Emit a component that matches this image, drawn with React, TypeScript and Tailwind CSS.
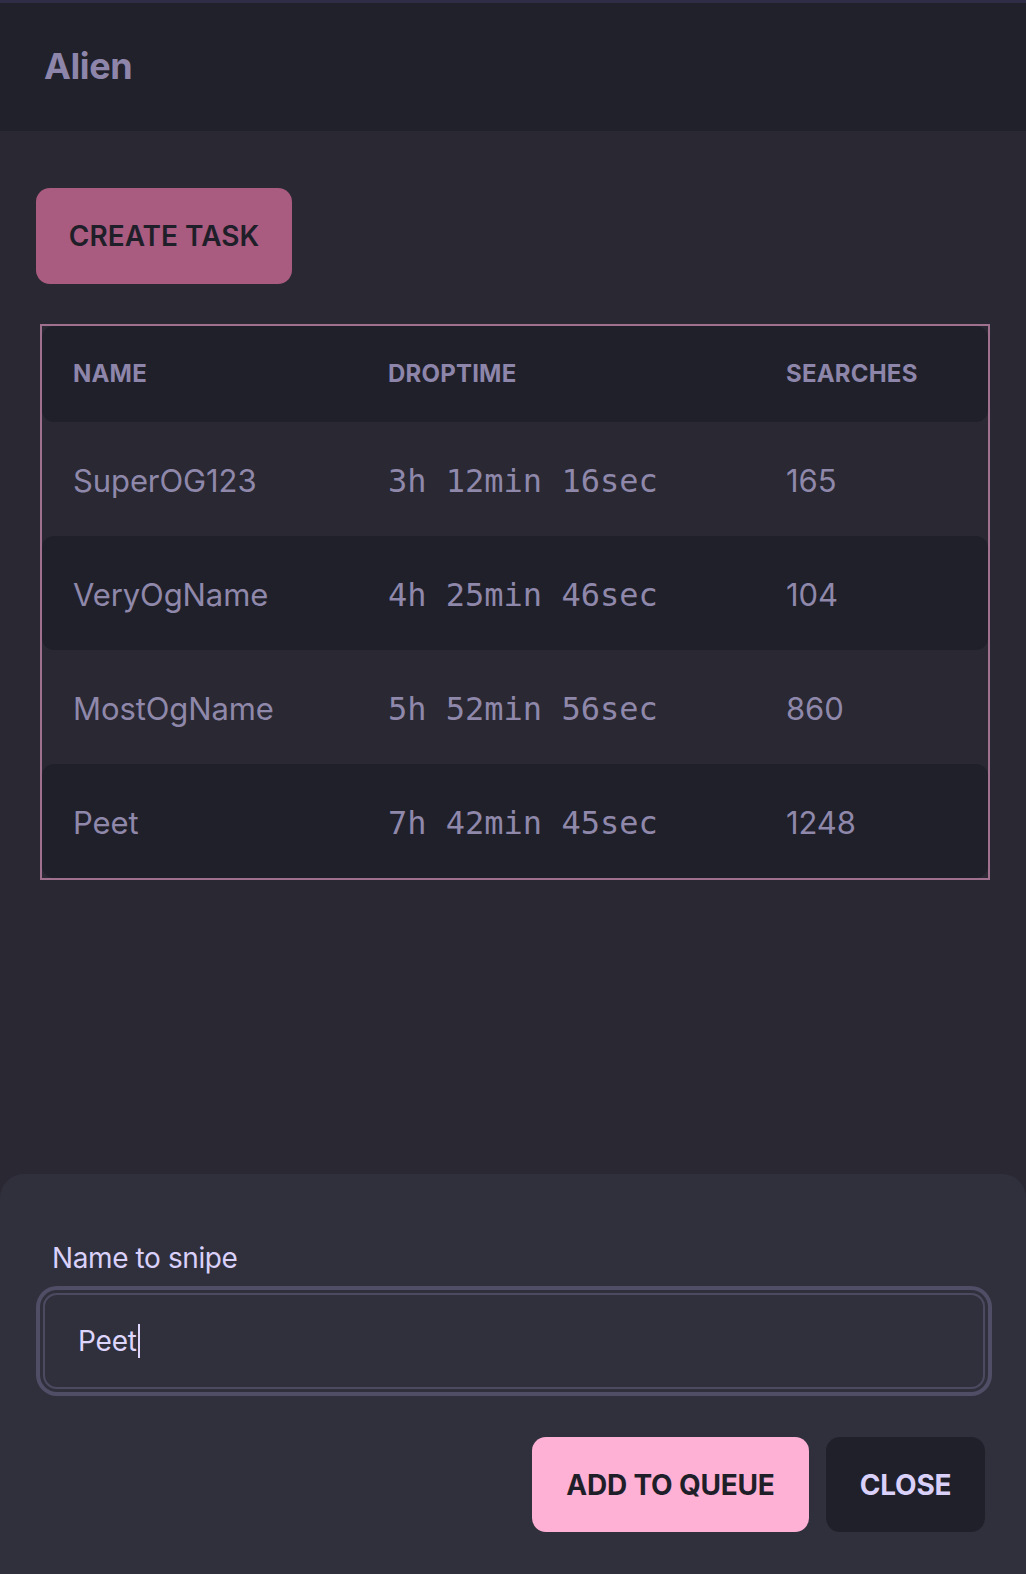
import React from "react";

const rows = [
  { name: "SuperOG123", time: "3h 12min 16sec", searches: "165" },
  { name: "VeryOgName", time: "4h 25min 46sec", searches: "104" },
  { name: "MostOgName", time: "5h 52min 56sec", searches: "860" },
  { name: "Peet", time: "7h 42min 45sec", searches: "1248" },
];

export default function App() {
  return (
    <div
      className="w-[1026px] h-[1574px] bg-[#292833] flex flex-col overflow-hidden"
      style={{ fontFamily: "Inter, 'Noto Sans', sans-serif" }}
    >
      <header className="h-[131px] shrink-0 border-t-[3px] border-[#2e2d45] bg-[#21212b] flex items-center pl-[44px] pb-[2px]">
        <h1 className="text-[36px] font-bold text-[#8d86aa] leading-none tracking-[-0.4px]">Alien</h1>
      </header>

      <main className="flex-1 px-[36px] pt-[57px]">
        <button className="w-[256px] h-[96px] rounded-[14px] bg-[#a95b80] text-[#1f1f29] text-[28px] font-semibold tracking-[0px] flex items-center justify-center">
          CREATE TASK
        </button>

        <div className="mt-[40px] ml-[4px] border-2 border-[#a0708f]">
          <div className="h-[96px] bg-[#20202a] rounded-[12px] grid grid-cols-[315px_398px_1fr] items-center pl-[31px] text-[24px] font-bold text-[#8d86aa] tracking-[0.2px]">
            <span>NAME</span>
            <span>DROPTIME</span>
            <span>SEARCHES</span>
          </div>
          {rows.map((r, i) => (
            <div
              key={r.name}
              className={
                i % 2 === 1
                  ? "h-[114px] bg-[#20202a] rounded-[12px] grid grid-cols-[315px_398px_1fr] items-center pl-[31px] pt-[4px] text-[#8f88ab]"
                  : "h-[114px] grid grid-cols-[315px_398px_1fr] items-center pl-[31px] pt-[4px] text-[#8f88ab]"
              }
            >
              <span className="text-[31px] tracking-[-0.1px]">{r.name}</span>
              <span
                className="text-[32px]"
                style={{ fontFamily: "'DejaVu Sans Mono', 'Liberation Mono', monospace" }}
              >
                {r.time}
              </span>
              <span className="text-[31px] tracking-[-0.1px]">{r.searches}</span>
            </div>
          ))}
        </div>
      </main>

      <section className="h-[400px] shrink-0 bg-[#30303d] rounded-t-[24px] pl-[43px] pr-[41px] pt-[67px]">
        <label className="block pl-[9px] text-[28px] leading-[34px] text-[#d9d1fa] tracking-[-0.4px]">Name to snipe</label>
        <div className="mt-[18px] h-[96px] rounded-[14px] border-2 border-[#4b4a60] ring-4 ring-[#4f4e66] ring-offset-[3px] ring-offset-[#30303d] flex items-center pl-[33px] text-[28px] text-[#ddd5fb] tracking-[-0.2px]">
          <span>Peet</span>
          <span className="w-[2px] h-[34px] bg-[#ddd5fb] ml-[1px]" />
        </div>
        <div className="mt-[48px] flex justify-end gap-[17px]">
          <button className="w-[277px] h-[95px] rounded-[14px] bg-[#ffb0d5] text-[#1f1f29] text-[28px] font-bold tracking-[-0.2px] flex items-center justify-center">
            ADD TO QUEUE
          </button>
          <button className="w-[159px] h-[95px] rounded-[14px] bg-[#20202a] text-[#d9d1fa] text-[28px] font-bold tracking-[-0.2px] flex items-center justify-center">
            CLOSE
          </button>
        </div>
      </section>
    </div>
  );
}
